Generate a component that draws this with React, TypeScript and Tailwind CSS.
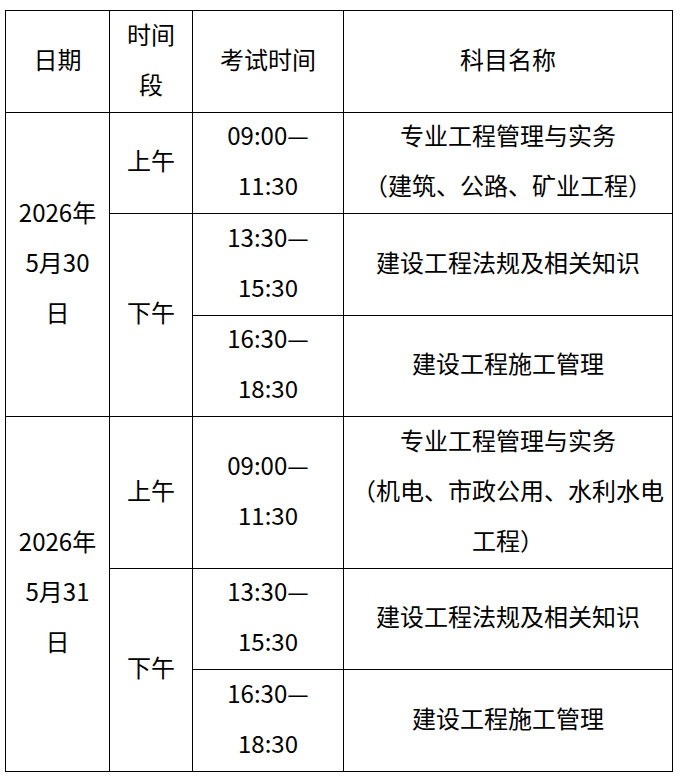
import React from 'react';

const td = 'border border-black p-0 text-center align-middle';

// lines of one cell; the -mt nudges text up to match the reference baseline
function Lines({ lines }: { lines: string[] }) {
  return (
    <div className="-mt-[6px]">
      {lines.map((l, i) => (
        <div key={i} className="whitespace-nowrap">
          {l}
        </div>
      ))}
    </div>
  );
}

export default function App() {
  return (
    <div
      className="min-h-[776px] w-[687px] bg-white pl-[5px] pt-[10px] text-[24px] leading-[50px] text-black"
      style={{ fontFamily: '"Microsoft YaHei", "Noto Sans CJK SC", "Noto Sans", sans-serif' }}
    >
      <table className="w-[667px] table-fixed border-collapse">
        <colgroup>
          <col className="w-[104px]" />
          <col className="w-[83px]" />
          <col className="w-[151px]" />
          <col className="w-[329px]" />
        </colgroup>
        <tbody>
          <tr className="h-[102px]">
            <td className={td}>
              <Lines lines={['日期']} />
            </td>
            <td className={td}>
              <Lines lines={['时间', '段']} />
            </td>
            <td className={td}>
              <Lines lines={['考试时间']} />
            </td>
            <td className={td}>
              <Lines lines={['科目名称']} />
            </td>
          </tr>

          <tr className="h-[101px]">
            <td className={td} rowSpan={3}>
              <Lines lines={['2026年', '5月30', '日']} />
            </td>
            <td className={td}>
              <Lines lines={['上午']} />
            </td>
            <td className={td}>
              <Lines lines={['09:00—', '11:30']} />
            </td>
            <td className={td}>
              <Lines lines={['专业工程管理与实务', '（建筑、公路、矿业工程）']} />
            </td>
          </tr>
          <tr className="h-[102px]">
            <td className={td} rowSpan={2}>
              <Lines lines={['下午']} />
            </td>
            <td className={td}>
              <Lines lines={['13:30—', '15:30']} />
            </td>
            <td className={td}>
              <Lines lines={['建设工程法规及相关知识']} />
            </td>
          </tr>
          <tr className="h-[101px]">
            <td className={td}>
              <Lines lines={['16:30—', '18:30']} />
            </td>
            <td className={td}>
              <Lines lines={['建设工程施工管理']} />
            </td>
          </tr>

          <tr className="h-[152px]">
            <td className={td} rowSpan={3}>
              <Lines lines={['2026年', '5月31', '日']} />
            </td>
            <td className={td}>
              <Lines lines={['上午']} />
            </td>
            <td className={td}>
              <Lines lines={['09:00—', '11:30']} />
            </td>
            <td className={td}>
              <Lines lines={['专业工程管理与实务', '（机电、市政公用、水利水电', '工程）']} />
            </td>
          </tr>
          <tr className="h-[101px]">
            <td className={td} rowSpan={2}>
              <Lines lines={['下午']} />
            </td>
            <td className={td}>
              <Lines lines={['13:30—', '15:30']} />
            </td>
            <td className={td}>
              <Lines lines={['建设工程法规及相关知识']} />
            </td>
          </tr>
          <tr className="h-[102px]">
            <td className={td}>
              <Lines lines={['16:30—', '18:30']} />
            </td>
            <td className={td}>
              <Lines lines={['建设工程施工管理']} />
            </td>
          </tr>
        </tbody>
      </table>
    </div>
  );
}
